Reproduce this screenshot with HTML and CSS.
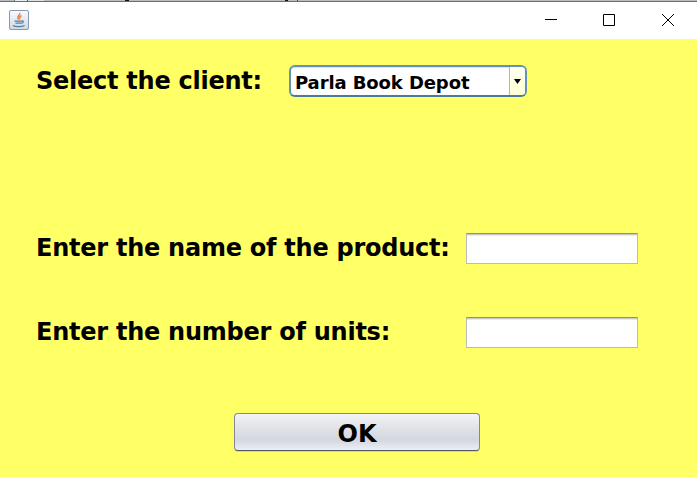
FILE: index.html
```html
<!DOCTYPE html>
<html lang="en"><head><meta charset="utf-8"><title>Client order</title><link rel="stylesheet" href="styles.css"></head>
<body>
<header class="titlebar">
<svg class="java" width="20" height="20" viewBox="0 0 20 20"><defs><linearGradient id="tile" x2="0" y2="1"><stop stop-color="#fafbfc"/><stop offset="1" stop-color="#cfd9e4"/></linearGradient></defs><rect x=".5" y=".5" width="19" height="19" rx="1.500" fill="url(#tile)" stroke="#8799ad"/><path d="M10.500 3c1.500 2-3.500 3-1 6.500M12.500 5.500c-3 1.500-1.500 2.500-2 4" fill="none" stroke="#e8834a" stroke-width="1.500"/><path d="M5.500 11.200h7M6.500 13.200h5.500M12.500 11c3-.8 2 2-.3 2.300M4 15.500c2 1.600 9 1.600 11.500 0" fill="none" stroke="#587f9d" stroke-width="1.200"/></svg>
<div class="controls">
<svg width="12" height="12" viewBox="0 0 12 12"><path d="M1 5.500h12"/></svg>
<svg width="12" height="12" viewBox="0 0 12 12"><path d="M.5.5h11v11H.5z"/></svg>
<svg width="12" height="12" viewBox="0 0 12 12"><path d="M0 0l12 12M12 0L0 12"/></svg>
</div></header>
<main class="form">
<div class="row client"><label>Select the client:</label><div class="combo"><span class="value">Parla Book Depot</span><span class="arrow"><svg width="7" height="5" viewBox="0 0 7 5"><path d="M0 0h7L3.500 5z"/></svg></span></div></div>
<div class="row product"><label>Enter the name of the product:</label><input class="field"></div>
<div class="row units"><label>Enter the number of units:</label><input class="field"></div>
<button class="ok">OK</button>
</main>
</body></html>
```
FILE: styles.css
```css
*{box-sizing:border-box}
body{margin:0;height:477px;overflow:hidden;background:#ff6;font-family:"DejaVu Sans",sans-serif;color:#000}
.titlebar{height:39px;background:linear-gradient(#2383c8,#2383c8) 0 1px/100% 1px no-repeat,linear-gradient(90deg,transparent 14px,#777 14px 15px,#e8edf1 15px 27px,#555 27px 28px,#dce1e5 28px 44px,transparent 44px 125px,#111 125px 129px,transparent 129px 285px,#111 285px 288px,transparent 288px 297px,#447 297px 298px,transparent 298px) 0 0/100% 1px no-repeat,linear-gradient(#b9bec2 0 1px,#fff 1px);display:flex;justify-content:space-between;padding:10px 23px 0 9px}
.controls{display:flex;gap:47px;padding-top:4px}
.controls svg{fill:none;stroke:#000;overflow:visible}
.form{height:438px;padding:26px 0 0 36px;display:flex;flex-direction:column;align-items:flex-start}
.row{display:flex;align-items:center;height:32px}
label{font-size:24px;font-weight:bold;letter-spacing:-.25px;white-space:nowrap}
.client label{width:253px}
.combo{width:238px;height:32px;border:2px solid #6590ba;border-bottom-color:#4f789f;border-radius:6px;background:#fff;display:flex;overflow:hidden;box-shadow:inset 0 1px #e4e4e4}
.value{flex:1;font-weight:bold;font-size:18px;letter-spacing:-.1px;padding-left:4px;line-height:31px;white-space:nowrap}
.arrow{width:16px;background:linear-gradient(#fffff5,#ffffd5);border-left:1px solid #b9b9a0;display:flex;align-items:center;justify-content:center}
.product{margin-top:135px}
.units{margin-top:52px}
.product label,.units label{width:430px}
.field{width:172px;height:31px;border:1px solid #bbb;border-top-color:#8d8d8d;background:linear-gradient(#c9c9c9 0 1px,#e9e9e9 1px 2px,#fff 2px)}
.ok{width:246px;height:38px;margin:65px 0 0 198px;padding:3px 0 0;font:bold 24px "DejaVu Sans",sans-serif;border:1px solid #858891;border-bottom-color:#555963;border-radius:4px;background:linear-gradient(#f3f4f6,#e2e4e8 35%,#d4d7de 72%,#ebeef7);box-shadow:0 1px #d9dc68}
```
